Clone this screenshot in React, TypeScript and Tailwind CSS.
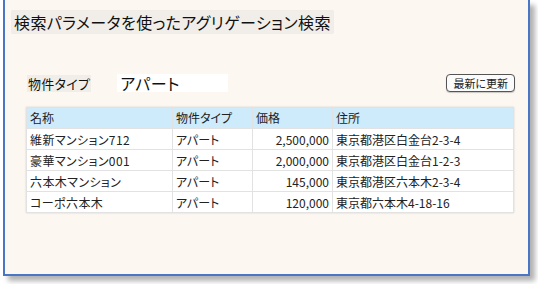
const rows = [
  { name: "維新マンション712", kind: "アパート", price: "2,500,000", address: "東京都港区白金台2-3-4" },
  { name: "豪華マンション001", kind: "アパート", price: "2,000,000", address: "東京都港区白金台1-2-3" },
  { name: "六本木マンション", kind: "アパート", price: "145,000", address: "東京都港区六本木2-3-4" },
  { name: "コーポ六本木", kind: "アパート", price: "120,000", address: "東京都六本木4-18-16" },
];

export default function App() {
  return (
    <div
      className="h-[284px] w-[538px] overflow-hidden bg-white [font-feature-settings:'palt']"
      style={{ fontFamily: '"Noto Sans CJK JP", "Noto Sans", sans-serif' }}
    >
      <div className="ml-[3px] h-[276px] w-[527px] border-x-2 border-b-2 border-[#4a76c6] bg-[#fcf8f1] shadow-[5px_5px_5px_rgba(0,0,0,0.3)]">
        <div className="px-[7px] pt-[10px]">
          <span className="inline-block bg-[#f1eee9] px-[2px] text-[16px] leading-[22px] tracking-[0.4px] text-[#111] shadow-[0_0_1px_rgba(0,0,0,0.25)]">
            検索パラメータを使ったアグリゲーション検索
          </span>
        </div>

        <div className="mt-[40px] flex items-center pl-[22px] pr-[13px]">
          <span className="bg-[#f1eee9] px-[1px] text-[13px] leading-[17px] tracking-[0.3px] text-[#111]">物件タイプ</span>
          <div className="ml-[26px] h-[18px] w-[111px] bg-white pl-[3px] text-[16px] leading-[18px] tracking-[0.5px] text-[#111]">
            アパート
          </div>
          <span className="flex-1" />
          <button className="h-[18px] rounded-[4px] border border-[#555] bg-[#fbfbfb] px-[6px] text-[11px] leading-[15px] text-[#222] shadow-[0_1px_1px_rgba(0,0,0,0.2)]">
            最新に更新
          </button>
        </div>

        <table className="ml-[21px] mt-[15px] w-[488px] border-collapse bg-white text-[12px] text-[#222] shadow-[0_0_2px_rgba(0,0,0,0.15)]">
          <thead>
            <tr className="h-[21px] bg-[#cdebfb]">
              <th className="w-[146px] border border-[#e2e2e2] px-[3px] text-left font-normal">名称</th>
              <th className="w-[80px] border border-[#e2e2e2] px-[3px] text-left font-normal">物件タイプ</th>
              <th className="w-[80px] border border-[#e2e2e2] px-[3px] text-left font-normal">価格</th>
              <th className="border border-[#e2e2e2] px-[3px] text-left font-normal">住所</th>
            </tr>
          </thead>
          <tbody>
            {rows.map((r) => (
              <tr key={r.name} className="h-[21px]">
                <td className="border border-[#e2e2e2] px-[3px] leading-[19px] tracking-[0.4px]">{r.name}</td>
                <td className="border border-[#e2e2e2] px-[3px] leading-[19px]">{r.kind}</td>
                <td className="border border-[#e2e2e2] px-[3px] text-right leading-[19px]">{r.price}</td>
                <td className="border border-[#e2e2e2] px-[3px] leading-[19px]">{r.address}</td>
              </tr>
            ))}
          </tbody>
        </table>
      </div>
    </div>
  );
}
